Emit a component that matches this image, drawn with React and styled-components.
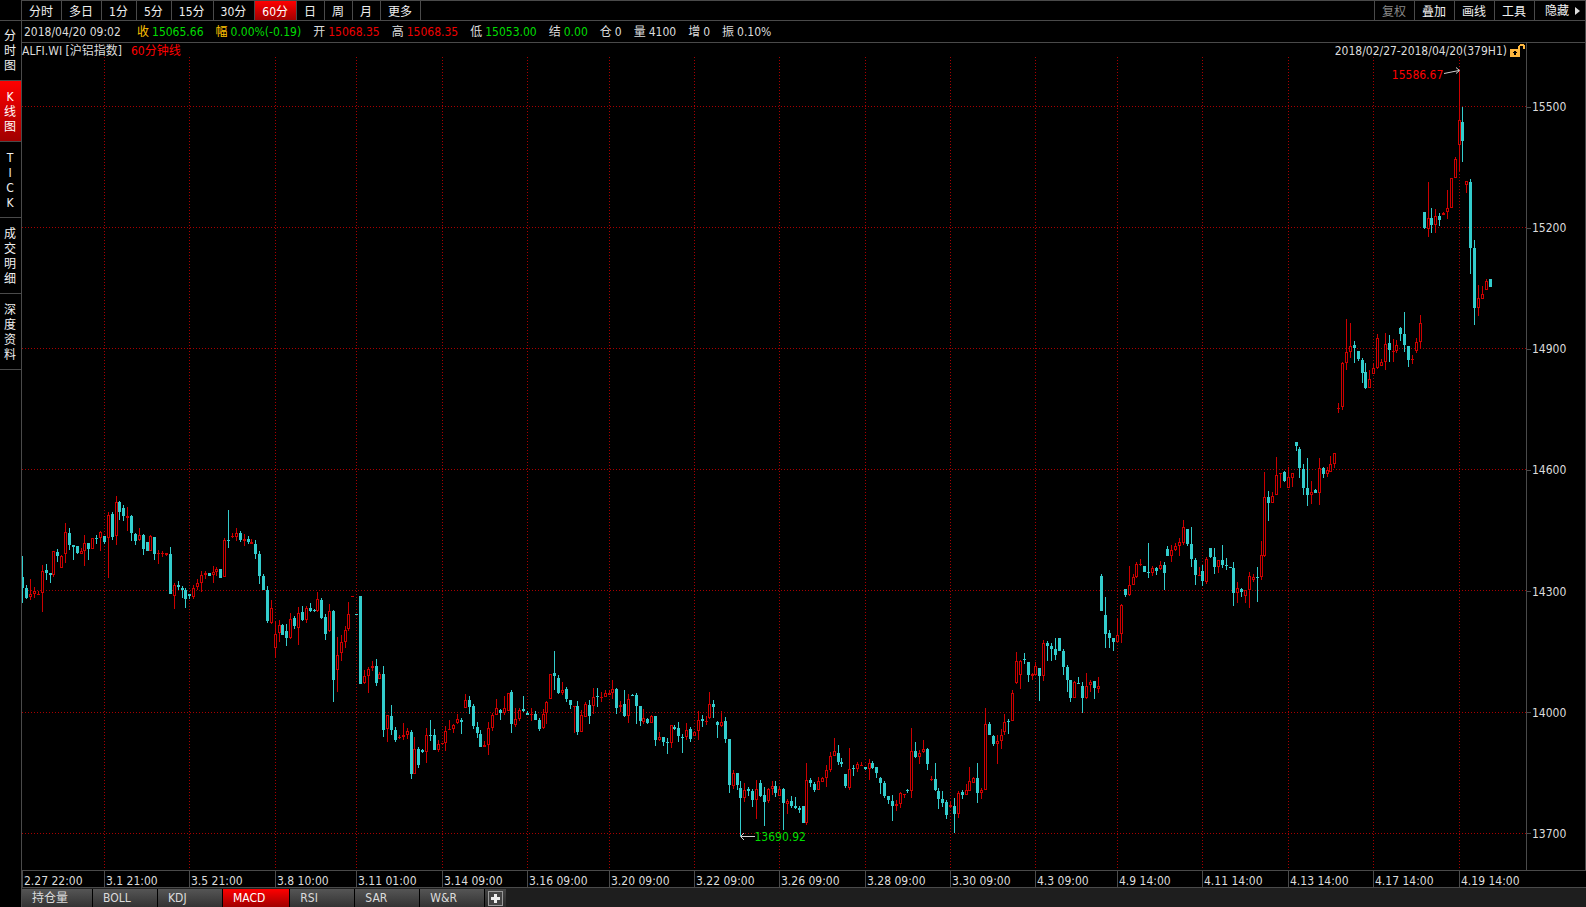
import styled, {createGlobalStyle, css} from 'styled-components';

const periods = ['分时', '多日', '1分', '5分', '15分', '30分', '60分', '日', '周', '月', '更多'];
const tools = ['复权', '叠加', '画线', '工具'];
const views = ['分时图', 'K线图', 'TICK', '成交明细', '深度资料'];
const indicators = ['持仓量', 'BOLL', 'KDJ', 'MACD', 'RSI', 'SAR', 'W&R'];

const quotes = [
	{label: '收', value: '15065.66', tone: 'down', gold: true},
	{label: '幅', value: '0.00%(-0.19)', tone: 'down', gold: true},
	{label: '开', value: '15068.35', tone: 'up'},
	{label: '高', value: '15068.35', tone: 'up'},
	{label: '低', value: '15053.00', tone: 'down'},
	{label: '结', value: '0.00', tone: 'down'},
	{label: '仓', value: '0'},
	{label: '量', value: '4100'},
	{label: '增', value: '0'},
	{label: '振', value: '0.10%'},
];

const prices = [15500, 15200, 14900, 14600, 14300, 14000, 13700];
const priceLines = [106, 227, 348, 469, 590, 712, 833];

// span is the share of the axis that each label's section takes
const times = [
	{text: '2.27 22:00', span: 82},
	{text: '3.1 21:00', span: 85},
	{text: '3.5 21:00', span: 86},
	{text: '3.8 10:00', span: 81},
	{text: '3.11 01:00', span: 86},
	{text: '3.14 09:00', span: 85},
	{text: '3.16 09:00', span: 82},
	{text: '3.20 09:00', span: 85},
	{text: '3.22 09:00', span: 85},
	{text: '3.26 09:00', span: 86},
	{text: '3.28 09:00', span: 85},
	{text: '3.30 09:00', span: 85},
	{text: '4.3 09:00', span: 82},
	{text: '4.9 14:00', span: 85},
	{text: '4.11 14:00', span: 86},
	{text: '4.13 14:00', span: 85},
	{text: '4.17 14:00', span: 86},
	{text: '4.19 14:00', span: 127},
];
const timeLines = [104, 189, 275, 356, 442, 527, 609, 694, 779, 865, 950, 1035, 1117, 1202, 1288, 1373, 1459];

// r = rising, f = falling; then x, high, body top, body bottom, low
const candles = `
f22 556 577 588 603,f26 585 588 598 599,r30 579 594 597 600,r34 587 591 594 598,r38 591 594 595 595,
r42 565 571 593 612,f46 564 570 573 580,f50 573 573 575 583,r53 551 551 575 577,f57 549 552 556 562,
r61 555 556 568 568,r65 523 532 554 563,f69 528 533 545 550,f73 545 545 547 560,f77 546 546 553 554,
r81 548 551 554 554,r84 535 543 551 566,f88 543 543 549 560,r92 538 538 549 549,f96 535 538 539 544,
r100 531 532 538 551,f104 536 536 542 544,r108 512 515 538 578,f112 512 514 537 540,r116 496 502 536 545,
f119 501 502 512 520,f123 505 508 516 521,r127 507 516 518 531,f131 515 516 533 541,f135 533 534 541 545,
r139 528 535 540 541,f143 534 535 549 555,f147 542 542 551 551,r150 535 536 551 551,f154 537 537 554 560,
r158 550 553 554 564,r162 551 553 554 557,r166 553 553 555 556,f170 547 554 594 594,r174 583 585 596 609,
f178 581 585 587 590,f182 586 588 590 598,f185 588 590 599 608,f189 594 594 596 599,r193 585 588 597 599,
r197 579 583 587 590,r201 571 575 583 592,r205 571 573 575 579,f209 573 573 576 576,r213 566 572 575 583,
r216 567 569 572 576,f220 569 569 578 578,r224 538 540 577 577,f228 510 540 541 548,r232 533 536 537 538,
r236 528 533 537 541,f240 531 533 540 542,r244 534 539 541 546,f248 536 539 542 544,r251 539 542 544 544,
f255 540 544 554 559,f259 551 554 576 584,f263 574 576 590 590,f267 586 590 621 623,r271 600 608 623 624,
r275 621 634 648 658,r279 620 625 633 642,f282 624 625 635 635,f286 624 631 638 646,r290 613 619 638 639,
f294 616 618 626 629,r298 607 613 628 645,f302 606 612 620 621,r306 606 608 620 623,f310 603 608 611 612,
f314 609 610 611 612,r317 592 599 611 612,f321 598 600 618 619,f325 614 617 634 640,r329 604 611 631 632,
f333 610 611 680 702,r337 637 655 670 692,r341 635 642 653 661,r345 626 630 642 648,r348 602 614 629 631,
r352 596 596 597 597,f356 614 614 615 615,f360 596 596 684 684,r364 670 676 683 684,r368 667 669 676 693,
r372 661 666 668 671,f376 659 666 683 686,r379 672 674 679 679,f383 666 674 730 737,r387 715 715 729 742,
f391 705 716 730 735,f395 727 730 740 742,r399 735 737 738 739,r403 723 735 737 740,r407 728 731 735 739,
f411 730 732 774 779,r414 737 749 774 774,f418 747 749 765 768,f422 749 750 752 753,r426 728 735 752 763,
f430 720 735 736 741,f434 729 735 750 750,r438 740 744 750 752,r442 743 743 744 745,r445 726 731 743 751,
r449 720 729 730 730,r453 724 725 729 733,r457 714 719 723 724,f461 718 720 722 734,r465 694 700 708 708,
f469 696 700 707 714,f473 704 706 726 729,f477 722 727 733 738,f480 730 734 747 747,r484 741 745 747 747,
r488 722 728 745 755,r492 713 715 728 731,r496 699 708 715 715,f500 709 710 713 720,r504 696 708 713 715,
r508 693 693 711 711,f511 690 692 724 733,r515 708 719 725 727,r519 708 710 719 721,f523 696 709 711 712,
f527 711 713 715 715,r531 708 714 715 721,f535 711 714 720 720,f539 718 720 729 731,r543 709 714 728 729,
r546 701 702 713 724,r550 674 674 699 699,f554 651 673 676 690,f558 675 678 693 694,r562 682 690 693 695,
f566 687 689 699 702,f570 700 700 705 709,r574 706 706 707 733,f577 701 706 732 735,r581 710 715 732 732,
r585 702 704 717 717,f589 700 705 716 724,r593 688 697 706 714,f597 688 696 697 707,r601 692 697 698 702,
r605 690 693 697 697,r609 690 693 695 695,r612 680 689 693 699,f616 688 689 708 714,r620 701 705 707 712,
f624 690 704 716 717,r628 694 699 716 723,f632 694 695 696 696,f636 693 695 706 724,f640 706 706 721 726,
r643 709 718 722 724,f647 718 719 723 724,r651 715 716 723 723,f655 716 716 740 746,r659 732 737 740 741,
f663 737 737 742 746,f667 738 742 743 754,r671 725 725 743 748,f674 725 727 729 730,f678 722 728 736 742,
f682 734 737 738 753,r686 723 730 737 740,f690 727 729 739 742,r694 731 732 736 736,r698 711 720 731 740,
f702 715 719 721 727,r706 716 721 722 725,r709 692 704 718 719,f713 700 704 707 718,f717 721 722 725 738,
r721 711 722 726 727,f725 717 721 739 743,f729 739 739 785 793,r733 770 773 786 789,f737 773 773 785 790,
f740 781 788 798 836,r744 783 790 798 802,f748 787 789 791 796,f752 789 791 800 807,r756 780 789 800 819,
f760 780 783 796 797,f764 787 795 802 826,r768 788 789 801 803,r772 781 786 789 795,f775 781 786 793 797,
r779 786 789 796 796,f783 788 789 803 830,r787 799 801 804 814,f791 796 801 806 808,f795 797 806 808 809,
f799 806 808 810 813,f803 806 806 823 823,r806 763 780 823 825,f810 778 780 783 787,f814 782 784 790 792,
r818 777 781 790 790,r822 777 778 782 782,r826 765 770 778 787,r830 752 756 770 772,r834 738 751 756 756,
f838 745 753 762 765,f841 758 762 764 767,f845 774 774 786 788,r849 748 769 788 790,f853 765 768 769 776,
r857 762 764 769 772,r861 762 765 766 766,f865 767 767 769 770,r869 759 763 769 780,f872 761 763 768 769,
f876 767 767 773 778,f880 777 778 783 794,f884 781 783 796 798,f888 796 796 800 804,f892 795 801 806 821,
r896 800 804 806 811,r900 792 793 804 808,r904 794 794 795 798,f907 789 790 791 793,r911 728 751 791 798,
f915 742 751 757 758,r919 750 753 757 764,r923 740 749 752 753,f927 748 749 764 770,r931 776 779 780 781,
f935 763 779 790 791,f938 788 791 799 809,f942 791 799 803 807,f946 800 802 815 819,r950 801 805 807 808,
f954 798 806 814 833,r958 791 793 814 818,f962 790 792 795 799,r966 784 790 795 795,r969 767 781 791 791,
r973 777 778 783 783,f977 763 778 793 803,r981 788 790 793 799,r985 708 724 790 790,f989 722 724 735 735,
f993 735 736 744 746,r997 735 741 744 764,r1001 729 735 741 749,r1004 714 722 732 735,f1008 719 721 722 734,
r1012 690 693 721 721,r1016 652 661 683 684,r1020 660 661 675 689,f1024 653 659 660 664,f1028 662 662 675 682,
r1032 673 674 676 680,r1035 662 666 675 675,f1039 668 668 676 701,r1043 640 643 676 681,f1047 641 643 646 661,
f1051 643 646 649 661,f1055 638 649 655 660,f1059 638 638 651 651,f1063 649 651 667 675,f1067 665 667 680 692,
f1070 680 680 698 702,r1074 681 682 698 698,f1078 677 683 684 684,f1082 682 686 698 713,r1086 673 686 698 699,
r1090 680 682 685 692,f1094 681 681 688 699,r1098 677 686 689 693,f1101 574 576 611 611,f1105 597 615 634 648,
f1109 630 633 638 648,f1113 638 638 642 651,r1117 618 635 642 643,r1121 604 605 634 643,f1125 589 589 595 597,
r1129 566 585 595 596,r1133 574 577 585 585,r1136 562 564 577 578,r1140 559 564 565 566,f1144 566 566 572 572,
f1148 543 572 573 578,r1152 566 568 573 576,f1156 567 568 571 575,r1160 561 565 569 570,f1164 562 565 573 590,
f1167 546 549 556 556,r1171 545 550 556 562,r1175 543 546 550 551,r1179 538 542 546 556,r1183 520 527 543 545,
f1187 529 529 544 546,f1191 527 544 559 567,f1195 558 560 575 585,r1199 567 575 576 576,f1202 565 571 581 586,
r1206 557 559 582 584,f1210 548 548 557 558,f1214 548 557 567 574,r1218 560 560 567 573,f1222 545 560 565 568,
f1226 558 565 566 570,f1230 567 567 568 568,f1233 562 568 593 606,r1237 582 588 593 603,f1241 588 589 592 597,
r1245 590 590 596 603,r1249 572 576 590 608,r1253 574 577 580 582,f1257 567 577 578 602,r1261 541 555 577 580,
r1264 472 497 556 557,f1268 491 497 503 521,r1272 492 496 503 503,r1276 457 475 495 495,r1280 473 473 474 488,
f1284 471 472 481 482,r1288 467 477 488 488,r1292 473 473 478 487,f1296 442 442 446 451,f1299 447 449 468 478,
f1303 464 469 488 495,f1307 458 488 495 506,r1311 481 492 495 504,f1315 489 490 493 493,r1319 458 468 493 505,
f1323 467 468 474 478,r1327 467 470 474 477,r1330 456 464 472 472,r1334 453 453 464 468,r1338 403 408 409 413,
r1342 362 363 407 410,r1346 319 352 363 370,r1350 323 346 352 358,f1354 341 345 348 363,f1358 351 351 359 361,
f1362 358 360 373 383,f1365 363 372 388 389,r1369 370 379 388 388,r1373 363 368 374 374,r1377 334 338 368 369,
r1381 359 362 366 366,r1385 333 344 362 370,f1389 335 343 350 362,r1393 339 351 352 362,r1396 340 345 351 353,
f1400 327 328 334 341,f1404 312 334 345 352,f1408 346 346 360 367,r1412 355 359 360 364,r1416 338 342 351 353,
r1420 315 323 342 349,f1424 212 212 228 229,r1428 182 218 229 237,f1431 208 218 225 233,r1435 209 216 225 233,
f1439 213 216 220 226,r1443 212 213 215 215,r1447 190 208 212 219,r1451 178 178 208 208,r1455 157 159 178 178,
r1459 71 120 145 171,f1462 107 122 141 162,r1466 181 181 185 193,f1470 179 182 248 274,f1474 240 248 308 325,
r1478 285 298 308 316,r1482 286 294 299 299,r1486 279 281 290 290,f1490 279 279 287 287`
	.trim().split(/,\s*/).map(row => {
		const [x, high, top, bottom, low] = row.slice(1).split(' ').map(Number);
		return {rising: row[0] === 'r', x, high, top, bottom, low};
	});

function Candle({rising, x, high, top, bottom, low}){
	return(
		<g fill={rising ? '#cc0000' : '#33cccc'}>
			<rect x={x} y={high} width="1" height={low - high}/>
			<rect x={x - 1} y={top} width="3" height={bottom - top}/>
			{rising && bottom - top > 2 &&
				<rect x={x} y={top + 1} width="1" height={bottom - top - 2} fill="#000"/>
			}
		</g>
	)
}

function Plot(){
	return(
		<StyledPlot>
			<svg viewBox="22 57 1504 813" preserveAspectRatio="none" shapeRendering="crispEdges" role="img" aria-label="60分钟线">
				<g stroke="#a80000" strokeWidth="1" strokeDasharray="1 2">
					{priceLines.map(y => <line key={y} x1="22" x2="1526" y1={y + 0.5} y2={y + 0.5}/>)}
					{timeLines.map(x => <line key={x} x1={x + 0.5} x2={x + 0.5} y1="57" y2="870"/>)}
				</g>
				{candles.map(c => <Candle key={c.x} {...c}/>)}
				<g stroke="#d0d0d0" strokeWidth="1" fill="none" shapeRendering="auto">
					<path d="M1444 73.5L1459 70.5M1456 67.5L1459.5 70.5L1456 73.5"/>
					<path d="M741 836.5H755M744 833L740.5 836.5L744 840"/>
				</g>
			</svg>
			<HighMark>15586.67</HighMark>
			<LowMark>13690.92</LowMark>
		</StyledPlot>
	)
}

function App(){
	return(
		<>
			<GlobalStyle/>
			<Screen>
				<Sidebar>
					{views.map(view => (
						<ViewTab key={view} $active={view === 'K线图'}>
							{[...view].map((char, i) => <span key={i}>{char}</span>)}
						</ViewTab>
					))}
				</Sidebar>
				<Main>
					<Toolbar>
						{periods.map(period => <BarButton key={period} $active={period === '60分'}>{period}</BarButton>)}
						<Spacer/>
						{tools.map((tool, i) => <ToolButton key={tool} $muted={i === 0}>{tool}</ToolButton>)}
						<HideButton>
							隐藏
							<svg width="5" height="8" viewBox="0 0 5 8"><path d="M0 0L5 4L0 8Z" fill="#ddd"/></svg>
						</HideButton>
					</Toolbar>
					<QuoteBar>
						<QuoteTime>2018/04/20 09:02</QuoteTime>
						{quotes.map(({label, value, tone, gold}) => (
							<Quote key={label} $tone={tone} $gold={gold}>
								<span>{label}</span>
								<b>{value}</b>
							</Quote>
						))}
					</QuoteBar>
					<Chart>
						<ChartBody>
							<Caption>
								<span>ALFI.WI [沪铝指数]</span>
								<em>60分钟线</em>
								<Spacer/>
								<span>2018/02/27-2018/04/20(379H1)</span>
								<svg width="16" height="14" viewBox="0 0 16 14" shapeRendering="crispEdges">
									<path d="M8 6V2H9V1H10V0H14V1H15V5H13V2H10V6Z" fill="#ffb840"/>
									<rect x="0" y="5" width="10" height="8" fill="#ffb840"/>
									<path d="M4 7H6V8H7V9H6V11H4V9H3V8H4Z" fill="#000"/>
								</svg>
							</Caption>
							<Plot/>
						</ChartBody>
						<PriceAxis>
							{prices.map(price => <li key={price}>{price}</li>)}
						</PriceAxis>
					</Chart>
					<TimeAxis>
						{times.map(({text}) => <li key={text}>{text}</li>)}
					</TimeAxis>
					<Indicators>
						{indicators.map(name => <IndicatorTab key={name} $active={name === 'MACD'}>{name}</IndicatorTab>)}
						<AddButton aria-label="添加">
							<svg width="15" height="15" viewBox="0 0 15 15" shapeRendering="crispEdges">
								<rect x="0.5" y="0.5" width="14" height="14" fill="#444" stroke="#999"/>
								<path d="M6 3H9V6H12V9H9V12H6V9H3V6H6Z" fill="#eee"/>
							</svg>
						</AddButton>
					</Indicators>
				</Main>
			</Screen>
		</>
	)
}

const line = '#4a4a4a';
const tones = {up: '#ee0000', down: '#00dd00'};

const activeRed = css`
	background: linear-gradient(#ff0000, #a00000);
	color: #fff;
`

const GlobalStyle = createGlobalStyle`
	body{
		margin: 0;
		background-color: #000;
	}
	*{
		box-sizing: border-box;
	}
	button{
		border: none;
		margin: 0;
		padding: 0;
		background: none;
		color: inherit;
		font: inherit;
		cursor: pointer;
	}
	ul{
		margin: 0;
		padding: 0;
		list-style: none;
	}
`

const Screen = styled.div`
	display: flex;
	height: 100vh;
	min-height: 480px;
	background-color: #000;
	color: #dcdcdc;
	font-family: 'DejaVu Sans Condensed', 'Noto Sans CJK SC', sans-serif;
	font-size: 12px;
	line-height: 16px;
	white-space: nowrap;
`

const Sidebar = styled.nav`
	width: 22px;
	flex-shrink: 0;
	padding-top: 20px;
	border-right: 1px solid ${line};
`

const ViewTab = styled.button`
	display: flex;
	flex-direction: column;
	align-items: center;
	width: 100%;
	padding: 9px 1px 6px 0;
	border-bottom: 1px solid ${line};
	line-height: 15px;
	color: #f0f0f0;
	${props => props.$active && activeRed}
	&:first-child{
		border-top: 1px solid ${line};
		padding-top: 8px;
	}
`

const Main = styled.main`
	flex: 1;
	min-width: 0;
	display: flex;
	flex-direction: column;
`

const Toolbar = styled.div`
	display: flex;
	height: 21px;
	border: 1px solid ${line};
	border-left: none;
`

const BarButton = styled.button`
	padding: 2px 8px 0 7px;
	border-right: 1px solid ${line};
	color: #f0f0f0;
	${props => props.$active && activeRed}
`

const ToolButton = styled.button`
	padding: 2px 8px 0 7px;
	border-left: 1px solid ${line};
	color: ${props => props.$muted ? '#888' : '#f0f0f0'};
`

const HideButton = styled(ToolButton)`
	display: flex;
	align-items: center;
	gap: 6px;
	padding: 1px 5px 0 10px;
`

const Spacer = styled.div`
	flex: 1;
`

const QuoteBar = styled.div`
	display: flex;
	align-items: center;
	gap: 12px;
	height: 22px;
	padding-left: 2px;
	border-bottom: 1px solid ${line};
	border-right: 1px solid ${line};
`

const QuoteTime = styled.span`
	min-width: 101px;
`

const Quote = styled.span`
	display: flex;
	gap: 3px;
	span{
		color: ${props => props.$gold ? '#ffc000' : 'inherit'};
	}
	b{
		font-weight: normal;
		color: ${props => tones[props.$tone] || 'inherit'};
	}
`

const Chart = styled.section`
	flex: 1;
	min-height: 0;
	display: flex;
	border-right: 1px solid ${line};
`

const ChartBody = styled.div`
	flex: 1;
	min-width: 0;
	display: flex;
	flex-direction: column;
`

const Caption = styled.div`
	display: flex;
	align-items: center;
	gap: 3px;
	height: 14px;
	padding-top: 2px;
	em{
		margin-left: 6px;
		font-style: normal;
		color: #ff0000;
	}
	svg{
		flex-shrink: 0;
	}
`

const StyledPlot = styled.div`
	position: relative;
	flex: 1;
	min-height: 0;
	svg{
		display: block;
		width: 100%;
		height: 100%;
	}
`

const Mark = styled.span`
	position: absolute;
	line-height: 16px;
`

const HighMark = styled(Mark)`
	top: 1.2%;
	right: 5.5%;
	color: #ff0000;
`

const LowMark = styled(Mark)`
	bottom: 3.1%;
	left: 48.7%;
	color: ${tones.down};
`

const PriceAxis = styled.ul`
	width: 59px;
	display: flex;
	flex-direction: column;
	justify-content: space-between;
	padding: 56px 0 28px;
	border-left: 1px solid ${line};
	li{
		display: flex;
		align-items: center;
		gap: 1px;
	}
	li::before{
		content: '';
		width: 4px;
		height: 1px;
		background-color: ${line};
	}
`

const TimeAxis = styled.ul`
	display: grid;
	grid-template-columns: ${times.map(t => `${t.span}fr`).join(' ')};
	height: 18px;
	border: 1px solid ${line};
	border-width: 1px 0;
	li{
		min-width: 0;
		height: 16px;
		padding-left: 1px;
		border-left: 1px solid ${line};
		line-height: 20px;
	}
`

const Indicators = styled.div`
	display: flex;
	gap: 1px;
	height: 19px;
	padding-top: 1px;
	background-color: #1e1e1e;
`

const IndicatorTab = styled.button`
	min-width: 64px;
	padding: 0 24px 0 10px;
	background: linear-gradient(#555, #333);
	box-shadow: 1px 0 #000;
	text-align: left;
	${props => props.$active && activeRed}
`

const AddButton = styled.button`
	display: flex;
	align-items: center;
	justify-content: center;
	width: 21px;
	background: linear-gradient(#444, #2a2a2a);
`

export default App;
